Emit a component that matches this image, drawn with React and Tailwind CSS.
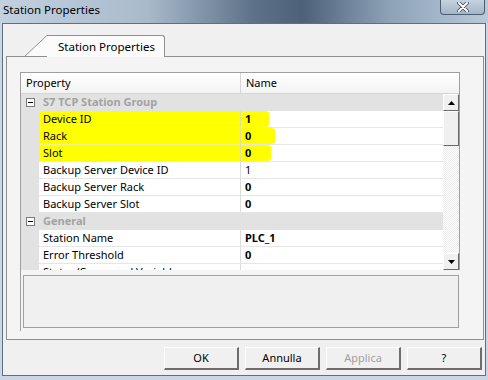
import React from 'react';

const groups = [
  {
    name: 'S7 TCP Station Group',
    rows: [
      { label: 'Device ID', value: '1', bold: true, mark: 'w-[28px]' },
      { label: 'Rack', value: '0', bold: true, mark: 'w-[34px]' },
      { label: 'Slot', value: '0', bold: true, mark: 'w-[30px]' },
      { label: 'Backup Server Device ID', value: '1' },
      { label: 'Backup Server Rack', value: '0', bold: true },
      { label: 'Backup Server Slot', value: '0', bold: true },
    ],
  },
  {
    name: 'General',
    rows: [
      { label: 'Station Name', value: 'PLC_1', bold: true },
      { label: 'Error Threshold', value: '0', bold: true },
      { label: 'Status/Command Variable', value: '' },
    ],
  },
];

const font = "font-['Segoe_UI','Noto_Sans','Open_Sans',sans-serif]";

const Collapse = () => (
  <div className="w-[9px] h-[9px] border border-[#7a7a7a] bg-white flex items-center justify-center">
    <div className="w-[5px] h-px bg-black" />
  </div>
);

const ScrollButton = ({ down }) => (
  <div className="h-[17px] bg-[#f0f0f0] border-t border-l border-t-white border-l-white border-b border-r border-b-[#696969] border-r-[#696969] flex items-center justify-center">
    <svg width="7" height="4" viewBox="0 0 7 4">
      <polygon points={down ? '0,0 7,0 3.5,4' : '3.5,0 7,4 0,4'} fill="#000" />
    </svg>
  </div>
);

const Button = ({ children, disabled }) => (
  <div
    className={`w-[75px] h-[23px] flex items-center justify-center bg-[#f0f0f0] border-t border-l border-t-white border-l-white border-b-2 border-r-2 border-b-[#6d6d6d] border-r-[#6d6d6d] text-[11px] ${
      disabled ? 'text-[#a0a0a0]' : 'text-black'
    }`}
  >
    {children}
  </div>
);

export default function App() {
  return (
    <div className={`w-[488px] h-[380px] flex flex-col bg-[#c8d6e5] overflow-hidden ${font}`}>
      {/* title bar */}
      <div className="h-[23px] shrink-0 flex items-start justify-between bg-[linear-gradient(90deg,#c3d1df_0%,#a9bacb_30%,#5d7189_52%,#4d6279_62%,#8ea3b8_80%,#b9c9d9_100%)]">
        <span className="pl-[3px] pt-[1px] text-[11.5px] leading-[18px] text-black">Station Properties</span>
        <div className="mr-[3px] w-[45px] h-[15px] rounded-b-[4px] border border-t-0 border-[#4e5e72] bg-[linear-gradient(180deg,#c6d3e0,#a3b5c7)] flex items-center justify-center">
          <svg width="12" height="10" viewBox="0 0 12 10">
            <path d="M2 1 L10 9 M10 1 L2 9" stroke="#3f4a57" strokeWidth="3.6" strokeLinecap="round" />
            <path d="M2 1 L10 9 M10 1 L2 9" stroke="#ffffff" strokeWidth="2" strokeLinecap="round" />
          </svg>
        </div>
      </div>

      {/* client area */}
      <div className="flex-1 mx-[2px] mb-[4px] border border-[#5e6f82] bg-[#f0f0f0] flex flex-col">
        {/* tab strip */}
        <div className="h-[32px] flex items-end pl-[21px]">
          <svg width="23" height="22" viewBox="0 0 23 22" className="shrink-0 -mb-px">
            <polygon points="0,22 23,0 23,22" fill="#fbfbfb" />
            <path d="M0.5 21.5 L23 0.5" stroke="#8e8f8f" strokeWidth="1" fill="none" />
          </svg>
          <div className="w-[118px] h-[22px] -mb-px border-t border-r border-[#8e8f8f] rounded-tr-[3px] bg-[#fbfbfb] flex items-center justify-center pl-[2px] text-[11.5px] text-black relative z-10">
            Station Properties
          </div>
        </div>

        {/* tab page */}
        <div className="ml-[3px] mr-[1px] h-[284px] border border-[#8e8f8f] bg-[#f4f4f4] pt-[15px] pl-[13px]">
          <div className="w-[440px] h-[259px] border-l border-t border-[#9f9f9f] flex flex-col">
            {/* property grid */}
            <div className="h-[197px] bg-white border-r border-[#a0a0a0] flex flex-col text-[11px]">
              <div className="h-[21px] flex border-b border-[#d5d5d5] bg-[linear-gradient(180deg,#ffffff,#f3f3f3)]">
                <div className="w-[220px] pl-[5px] flex items-center border-r border-[#d5d5d5]">Property</div>
                <div className="flex-1 pl-[5px] flex items-center">Name</div>
              </div>
              <div className="flex-1 flex overflow-hidden">
                <div className="flex-1 flex flex-col overflow-hidden">
                  {groups.map((g) => (
                    <React.Fragment key={g.name}>
                      <div className="h-[17px] shrink-0 flex items-center bg-[#e2e2e2]">
                        <div className="w-[18px] flex justify-center">
                          <Collapse />
                        </div>
                        <span className="pl-[4px] font-bold text-[#a3a3a3]">{g.name}</span>
                      </div>
                      {g.rows.map((r) => (
                        <div key={r.label} className="h-[17px] shrink-0 flex">
                          <div className="w-[18px] bg-[#e2e2e2]" />
                          <div
                            className={`w-[202px] pl-[4px] flex items-center border-b border-r ${
                              r.mark ? 'bg-[#ffff00] border-b-[#f4f48c] border-r-[#e0e0a0]' : 'border-b-[#e6e6e6] border-r-[#dcdcdc]'
                            }`}
                          >
                            {r.label}
                          </div>
                          <div className="flex-1 flex border-b border-[#e6e6e6]">
                            <div className={`${r.mark ? `${r.mark} bg-[#ffff00] rounded-r-[3px]` : ''} pl-[4px] flex items-center ${r.bold ? 'font-bold' : ''}`}>
                              {r.value}
                            </div>
                          </div>
                        </div>
                      ))}
                    </React.Fragment>
                  ))}
                </div>
                {/* scrollbar */}
                <div className="w-[16px] flex flex-col">
                  <ScrollButton />
                  <div className="h-[35px] bg-[#f0f0f0] border-t border-l border-t-white border-l-white border-b border-r border-b-[#696969] border-r-[#696969]" />
                  <div className="flex-1 bg-[repeating-conic-gradient(#ececec_0_25%,#ffffff_0_50%)] bg-[length:2px_2px]" />
                  <ScrollButton down />
                </div>
              </div>
            </div>
            {/* description */}
            <div className="mt-[5px] ml-[2px] w-[436px] h-[53px] border border-[#a0a0a0] bg-[#f0f0f0]" />
          </div>
        </div>

        {/* buttons */}
        <div className="mt-[7px] flex justify-end gap-[6px] pr-[3px]">
          <Button>OK</Button>
          <Button>Annulla</Button>
          <Button disabled>Applica</Button>
          <Button>?</Button>
        </div>
      </div>
    </div>
  );
}
